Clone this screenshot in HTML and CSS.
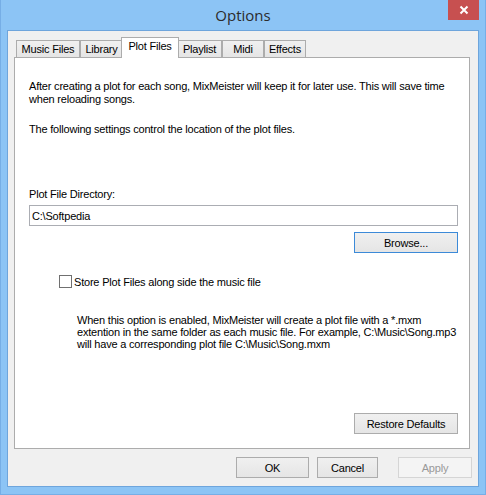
FILE: index.html
```html
<!DOCTYPE html>
<html lang="en">
<head>
  <meta charset="UTF-8">
  <title>Options</title>
  <link rel="stylesheet" href="styles.css">
</head>
<body>

  <div class="window">
    <div class="titlebar">
      <span></span>
      <span class="title">Options</span>
      <button class="close" aria-label="Close">
        <svg width="10" height="10" viewBox="0 0 10 10">
          <path d="M1.5 1.5 L8.5 8.5 M8.5 1.5 L1.5 8.5" stroke="#fff" stroke-width="2" fill="none"/>
        </svg>
      </button>
    </div>

    <div class="client">
      <div class="tabs">
        <div class="tab w-music">Music Files</div>
        <div class="tab w-library">Library</div>
        <div class="tab selected w-plot">Plot Files</div>
        <div class="tab w-playlist">Playlist</div>
        <div class="tab w-midi">Midi</div>
        <div class="tab w-effects">Effects</div>
      </div>

      <div class="panel">
        <p class="intro">After creating a plot for each song, MixMeister will keep it for later use. This will save time when reloading songs.</p>
        <p class="intro second">The following settings control the location of the plot files.</p>

        <label class="dir-label" for="plotDir">Plot File Directory:</label>
        <input class="dir-input" id="plotDir" type="text" value="C:\Softpedia">
        <button class="btn default browse">Browse...</button>

        <label class="check-row">
          <input type="checkbox" class="check">
          <span>Store Plot Files along side the music file</span>
        </label>

        <p class="desc">When this option is enabled, MixMeister will create a plot file with a *.mxm extention in the same folder as each music file. For example, C:\Music\Song.mp3 will have a corresponding plot file C:\Music\Song.mxm</p>

        <button class="btn restore">Restore Defaults</button>
      </div>

      <div class="actions">
        <button class="btn ok">OK</button>
        <button class="btn cancel">Cancel</button>
        <button class="btn apply" disabled>Apply</button>
      </div>
    </div>
  </div>

</body>
</html>
```

FILE: styles.css
```css
* {
  box-sizing: border-box;
}
body {
  margin: 0;
  font-family: 'Liberation Sans', Arial, sans-serif;
  font-size: 11px;
  letter-spacing: -0.2px;
  color: #000;
}
.window {
  width: 486px;
  height: 495px;
  background: #8cc4f5;
  border: 1px solid #76aee6;
  border-top: none;
  display: flex;
  flex-direction: column;
}
.titlebar {
  height: 30px;
  display: grid;
  grid-template-columns: 1fr auto 1fr;
}
.title {
  font-family: 'Open Sans', 'Noto Sans', sans-serif;
  font-size: 15px;
  letter-spacing: 0;
  color: #2b2b2b;
  line-height: 30px;
}
.close {
  justify-self: end;
  align-self: start;
  width: 31px;
  height: 20px;
  margin-right: 6px;
  padding: 0;
  border: none;
  background: #c75050;
  display: flex;
  align-items: center;
  justify-content: center;
}
.client {
  height: 457px;
  margin: 0 6px;
  border: 1px solid #6ea5dc;
  background: #f0f0f0;
  padding: 6px 8px 0 6px;
  display: flex;
  flex-direction: column;
}

/* tabs */
.tabs {
  display: flex;
  align-items: flex-end;
  height: 21px;
  margin-bottom: -1px;
  padding-left: 2px;
  position: relative;
  z-index: 1;
}
.tab {
  height: 18px;
  border: 1px solid #acacac;
  background: linear-gradient(#f0f0f0, #e5e5e5);
  text-align: center;
  line-height: 16px;
  white-space: nowrap;
}
.tab.selected {
  height: 21px;
  margin: 0 -2px;
  background: #fff;
  border-bottom: none;
  line-height: 17px;
  position: relative;
  z-index: 2;
}
.w-music { width: 64px; }
.w-library { width: 43px; }
.w-plot { width: 58px; }
.w-playlist { width: 45px; }
.w-midi { width: 42px; }
.w-effects { width: 42px; }

/* panel */
.panel {
  width: 456px;
  height: 392px;
  background: #fff;
  border: 1px solid #acacac;
  padding: 22px 11px 14px 14px;
  display: flex;
  flex-direction: column;
}
.intro {
  margin: 0;
  line-height: 13px;
}
.intro.second {
  margin-top: 17px;
}
.dir-label {
  margin-top: 52px;
  line-height: 13px;
}
.dir-input {
  margin-top: 4px;
  height: 21px;
  border: 1px solid #abadb3;
  padding: 0 2px;
  font: inherit;
  letter-spacing: inherit;
  color: #000;
}
.btn {
  height: 21px;
  border: 1px solid #acacac;
  background: linear-gradient(#f0f0f0, #e5e5e5);
  font: inherit;
  letter-spacing: inherit;
  color: #000;
  padding: 0;
}
.btn.default {
  border-color: #3c8ad8;
}
.browse {
  margin-top: 6px;
  width: 104px;
  align-self: flex-end;
}
.check-row {
  margin: 22px 0 0 30px;
  display: flex;
  align-items: center;
  gap: 2px;
  height: 13px;
}
.check {
  appearance: none;
  margin: 0;
  width: 13px;
  height: 13px;
  border: 1px solid #707070;
  background: #fff;
}
.desc {
  margin: 26px -8px 0 48px;
  line-height: 12px;
}
.restore {
  margin-top: auto;
  width: 104px;
  align-self: flex-end;
}

/* dialog buttons */
.actions {
  margin: 8px -2px 0 0;
  display: flex;
  justify-content: flex-end;
}
.ok { width: 73px; }
.cancel { width: 61px; margin-left: 8px; }
.apply {
  width: 74px;
  margin-left: 20px;
  border-color: #d5d5d5;
  background: #f4f4f4;
  color: #999;
}
```
